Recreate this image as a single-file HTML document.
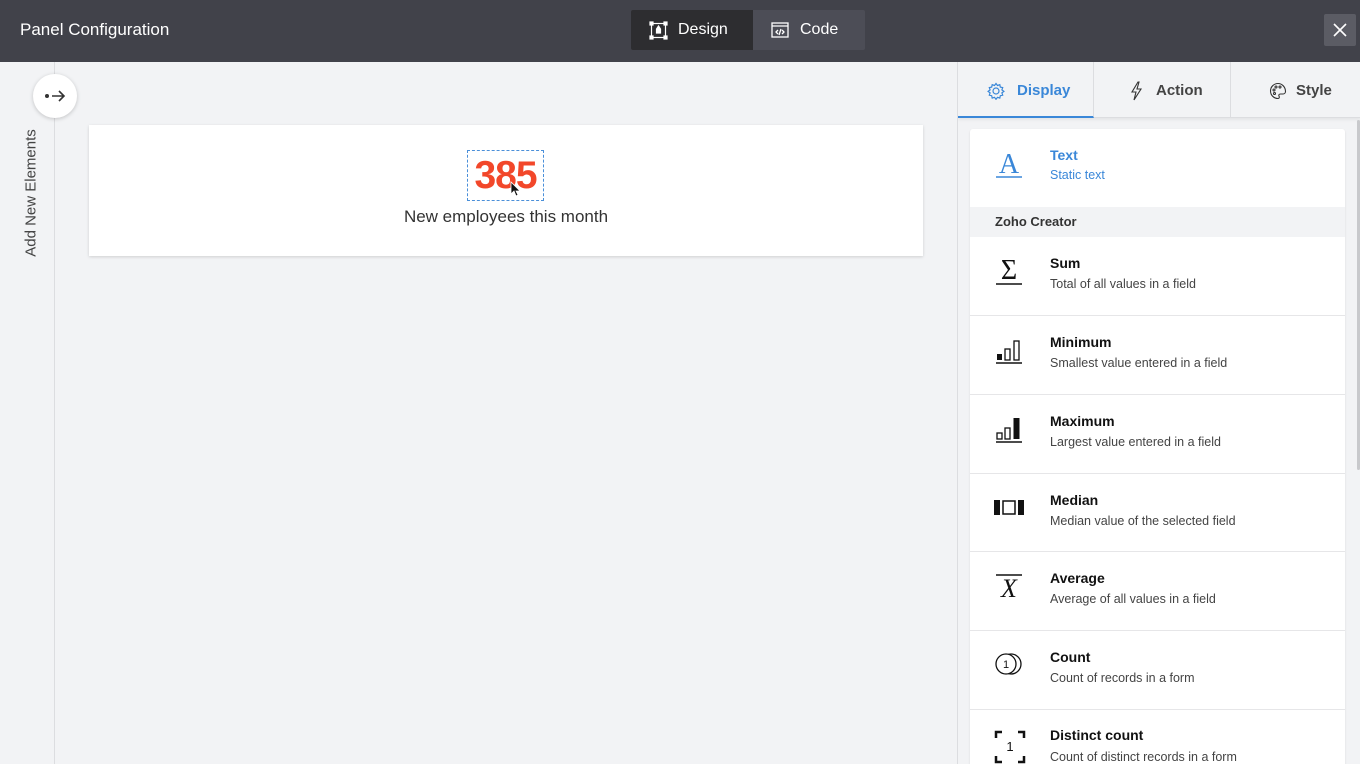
<!DOCTYPE html><html><head><style>
*{box-sizing:border-box;margin:0;padding:0}
html,body{width:1360px;height:764px;overflow:hidden}
body{background:#f2f3f5;font-family:"Liberation Sans",sans-serif;position:relative;color:#222}
.hdr{position:absolute;left:0;top:0;width:1360px;height:62px;background:#41424a}
.hdr .t{position:absolute;left:20px;top:20px;color:#fff;font-size:17px}
.seg{position:absolute;left:631px;top:10px;width:234px;height:40px;background:#4c4d56;border-radius:2px;overflow:hidden}
.seg div{position:absolute;top:0;height:40px;color:#fff;font-size:16px;line-height:40px}
.close{position:absolute;left:1324px;top:14px;width:32px;height:32px;background:#5b5c64;border-radius:2px}
.strip{position:absolute;left:0;top:62px;width:55px;height:702px;border-right:1px solid #dcdde0}
.circ{position:absolute;left:33px;top:74px;width:44px;height:44px;border-radius:50%;background:#fff;box-shadow:0 1px 4px rgba(0,0,0,.2)}
.vt{position:absolute;left:31px;top:193px;transform:translate(-50%,-50%) rotate(-90deg);font-size:15px;color:#444;white-space:nowrap}
.card{position:absolute;left:89px;top:125px;width:834px;height:131px;background:#fff;box-shadow:0 1px 3px rgba(0,0,0,.15)}
.num{position:absolute;left:378px;top:25px;width:77px;height:51px;border:1px dashed #4a8fd9;color:#f2472a;font-weight:bold;font-size:39px;text-align:center;line-height:50px;letter-spacing:-1px}
.lbl{position:absolute;left:0;width:834px;top:82px;text-align:center;font-size:17px;color:#333}
.rp{position:absolute;left:957px;top:62px;width:403px;height:702px;background:#f2f3f5;border-left:1px solid #dcdde0;overflow:hidden}
.tabs{position:absolute;left:0;top:0;width:403px;height:56px;border-bottom:1px solid #dcdde0;box-shadow:0 2px 3px rgba(0,0,0,.06)}
.tab{position:absolute;top:0;height:56px;line-height:57px;font-size:15px;font-weight:bold;color:#444}
.list{position:absolute;left:12px;top:67px;width:375px;height:640px;background:#fff;border-radius:3px;box-shadow:0 1px 2px rgba(0,0,0,.1)}
.row{position:absolute;left:0;width:375px;border-bottom:1px solid #e6e6e8}
.row .h{position:absolute;left:80px;top:18px;font-size:14px;font-weight:bold;color:#111}
.row .d{position:absolute;left:80px;top:40px;font-size:12.5px;color:#444}
.row svg{position:absolute;left:24px;top:20px}
.sec{position:absolute;left:0;top:78px;width:375px;height:30px;background:#f2f3f5;font-size:13px;font-weight:bold;color:#333;padding:7px 25px}
.sb{position:absolute;left:1357px;top:120px;width:3px;height:350px;background:#c8c9cc;border-radius:2px}
</style></head><body>
<div class="hdr"><div class="t">Panel Configuration</div>
<div class="seg"><div style="left:0;width:122px;background:#2d2d30"></div>
<svg style="position:absolute;left:18px;top:11px" width="19" height="19" viewBox="0 0 19 19" fill="none" stroke="#fff" stroke-width="1.2"><rect x="2.5" y="2.5" width="14" height="14"/><rect x="1" y="1" width="3" height="3" fill="#fff"/><rect x="15" y="1" width="3" height="3" fill="#fff"/><rect x="1" y="15" width="3" height="3" fill="#fff"/><rect x="15" y="15" width="3" height="3" fill="#fff"/><path d="M9.5 5l2 3v4h-4V8z" fill="#fff"/></svg>
<div style="left:47px">Design</div>
<svg style="position:absolute;left:140px;top:12px" width="18" height="16" viewBox="0 0 18 16" fill="none" stroke="#fff" stroke-width="1.3"><rect x="1" y="1" width="16" height="14"/><path d="M1 4h16M7 8l-2 2 2 2M11 8l2 2-2 2M10 7l-2 6"/></svg>
<div style="left:169px">Code</div></div>
<div class="close"><svg width="32" height="32"><path d="M10 10l12 12M22 10L10 22" stroke="#fff" stroke-width="1.6"/></svg></div></div>
<div class="strip"></div>
<div class="circ"><svg width="44" height="44"><circle cx="14" cy="22" r="2" fill="#333"/><path d="M19 22h12M26 17l5 5-5 5" stroke="#333" stroke-width="1.6" fill="none"/></svg></div>
<div class="vt">Add New Elements</div>
<div class="card"><div class="num">385</div><div class="lbl">New employees this month</div>
<svg style="position:absolute;left:421px;top:56px" width="12" height="16"><path d="M1 1v12l3-3 2 5 2-1-2-4h4z" fill="#111" stroke="#fff" stroke-width=".8"/></svg></div>
<div class="rp">
<div class="tabs">
<div style="position:absolute;left:0;top:0;width:136px;height:56px;border-bottom:2px solid #3a87d8;border-right:1px solid #dcdde0"></div>
<div style="position:absolute;left:272px;top:0;width:1px;height:56px;background:#dcdde0"></div>
<svg style="position:absolute;left:29px;top:20px" width="18" height="18" viewBox="0 0 18 18" fill="none" stroke="#3a87d8" stroke-width="1.2"><circle cx="9" cy="9" r="3"/><path d="M9 1.5l1.5 2 2.3-.8.5 2.4 2.4.5-.8 2.3 2 1.5-2 1.5.8 2.3-2.4.5-.5 2.4-2.3-.8-1.5 2-1.5-2-2.3.8-.5-2.4-2.4-.5.8-2.3-2-1.5 2-1.5-.8-2.3 2.4-.5.5-2.4 2.3.8z"/></svg>
<div class="tab" style="left:59px;color:#3a87d8">Display</div>
<svg style="position:absolute;left:172px;top:19px" width="12" height="20" viewBox="0 0 12 20" fill="none" stroke="#333" stroke-width="1.1"><path d="M8 1L2 11h4l-2 8 7-11H7l2-7z"/></svg>
<div class="tab" style="left:198px">Action</div>
<svg style="position:absolute;left:311px;top:20px" width="18" height="18" viewBox="0 0 18 18" fill="none" stroke="#333" stroke-width="1.1"><path d="M9 1.5a7.5 7.5 0 1 0 0 15c1.5 0 1.5-1.5 1-2.5s0-2 1.5-2H14a2.5 2.5 0 0 0 2.5-2.5C16.5 5 13 1.5 9 1.5z"/><circle cx="5" cy="8" r="1"/><circle cx="7" cy="5" r="1"/><circle cx="11" cy="5" r="1"/><circle cx="5.5" cy="11.5" r="1"/></svg>
<div class="tab" style="left:338px">Style</div>
</div>
<div class="list">
<div class="row" style="top:0;height:78px;border:0"><svg width="30" height="30"><text x="15" y="24" text-anchor="middle" font-family="Liberation Serif" font-size="28" fill="#3a87d8">A</text><line x1="2" y1="28" x2="28" y2="28" stroke="#3a87d8" stroke-width="1.5"/></svg><div class="h" style="color:#3a87d8;top:18px">Text</div><div class="d" style="color:#3a87d8;top:39px">Static text</div></div>
<div class="sec">Zoho Creator</div>
<div class="row" style="top:108px;height:79px"><svg width="30" height="30"><text x="15" y="22" text-anchor="middle" font-family="Liberation Serif" font-size="28" fill="#111">Σ</text><line x1="2" y1="27" x2="28" y2="27" stroke="#111" stroke-width="1.5"/></svg><div class="h">Sum</div><div class="d">Total of all values in a field</div></div>
<div class="row" style="top:187px;height:79px"><svg width="30" height="30"><rect x="3" y="18" width="5" height="6" fill="#111"/><rect x="11" y="13" width="5" height="11" fill="none" stroke="#111" stroke-width="1.3"/><rect x="20" y="5" width="5" height="19" fill="none" stroke="#111" stroke-width="1.3"/><line x1="2" y1="27" x2="28" y2="27" stroke="#111" stroke-width="1.5"/></svg><div class="h">Minimum</div><div class="d">Smallest value entered in a field</div></div>
<div class="row" style="top:266px;height:79px"><svg width="30" height="30"><rect x="3" y="18" width="5" height="6" fill="none" stroke="#111" stroke-width="1.3"/><rect x="11" y="13" width="5" height="11" fill="none" stroke="#111" stroke-width="1.3"/><rect x="19.5" y="3" width="6" height="21" fill="#111"/><line x1="2" y1="27" x2="28" y2="27" stroke="#111" stroke-width="1.5"/></svg><div class="h">Maximum</div><div class="d">Largest value entered in a field</div></div>
<div class="row" style="top:345px;height:78px"><svg width="32" height="30"><rect x="0" y="6" width="6" height="15" fill="#111"/><rect x="9" y="7" width="12" height="13" fill="none" stroke="#111" stroke-width="1.5"/><rect x="24" y="6" width="6" height="15" fill="#111"/></svg><div class="h">Median</div><div class="d">Median value of the selected field</div></div>
<div class="row" style="top:423px;height:79px"><svg width="30" height="30"><line x1="2" y1="3" x2="28" y2="3" stroke="#111" stroke-width="1.5"/><text x="15" y="25" text-anchor="middle" font-family="Liberation Serif" font-size="26" font-style="italic" fill="#111">X</text></svg><div class="h">Average</div><div class="d">Average of all values in a field</div></div>
<div class="row" style="top:502px;height:79px"><svg width="32" height="30"><circle cx="17" cy="13" r="10" fill="#fff" stroke="#111" stroke-width="1.3"/><circle cx="12" cy="13" r="10" fill="#fff" stroke="#111" stroke-width="1.3"/><text x="12" y="17" text-anchor="middle" font-size="11" fill="#111">1</text></svg><div class="h">Count</div><div class="d">Count of records in a form</div></div>
<div class="row" style="top:581px;height:79px;border:0"><svg width="32" height="34"><path d="M2 8V2h6M24 2h6v6M2 26v6h6M24 32h6v-6" fill="none" stroke="#111" stroke-width="2.5"/><text x="16" y="21" text-anchor="middle" font-size="13" fill="#111">1</text></svg><div class="h" style="top:17px">Distinct count</div><div class="d" style="top:40px">Count of distinct records in a form</div></div>
</div></div>
<div class="sb"></div>
</body></html>
